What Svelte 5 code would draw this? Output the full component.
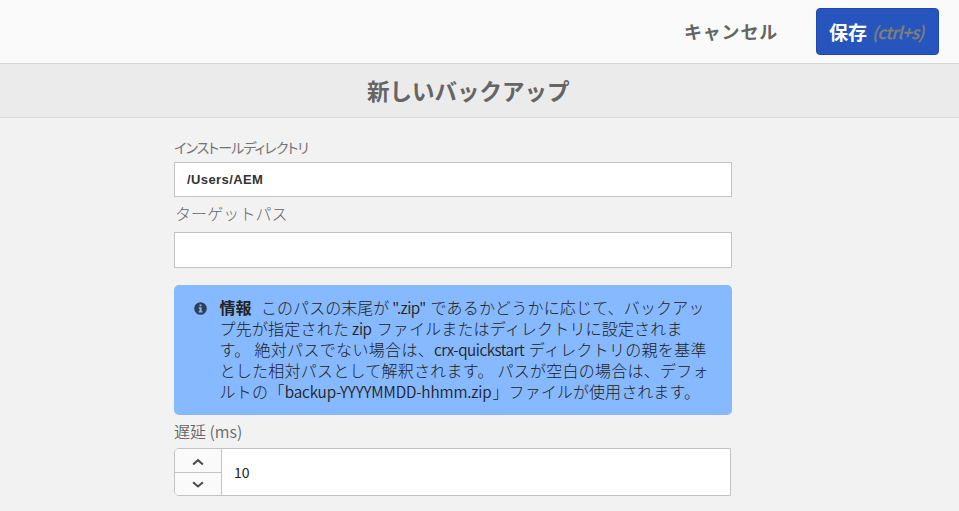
<script>
  const lines = [
    [{ t: 'このパスの末尾が', s: 0.05 }, { t: ' ".zip" ', latin: true, s: -0.5, m: 2 }, { t: 'であるかどうかに応じて、バックアッ', s: 0.18 }],
    [{ t: 'プ先が指定された', s: 0.2 }, { t: ' zip ', latin: true, s: -0.4, m: 2 }, { t: 'ファイルまたはディレクトリに設定されま', s: 0.16 }],
    [{ t: 'す。 絶対パスでない場合は、', s: 0.33 }, { t: 'crx-quickstart ', latin: true, s: -0.48, m: 1.7 }, { t: 'ディレクトリの親を基準', s: 0.28 }],
    [{ t: 'とした相対パスとして解釈されます。 パスが空白の場合は、デフォ', s: 0.25 }],
    [{ t: 'ルトの「', s: 0.3 }, { t: 'backup-YYYYMMDD-hhmm.zip', latin: true, s: -0.15, m: 1 }, { t: '」ファイルが使用されます。', s: 0.08 }]
  ];
</script>

<div class="page">
  <header>
    <button class="cancel">キャンセル</button>
    <button class="save"><span>保存</span><em>(ctrl+s)</em></button>
  </header>
  <h1>新しいバックアップ</h1>
  <main>
    <label class="install" for="install">インストールディレクトリ</label>
    <div class="field" id="install">/Users/AEM</div>
    <label class="target" for="target">ターゲットパス</label>
    <div class="field tall" id="target"></div>
    <section class="info">
      <svg class="badge" width="13" height="13" viewBox="0 0 13 13">
        <circle cx="6.5" cy="6.5" r="6.3" fill="#303f54" />
        <path d="M5.5 2.4h2v1.9h-2zM4.7 5.3h2.9v3.9h.9v1.2H4.6V9.2h.9V6.5h-.8z" fill="#86b9ff" />
      </svg>
      <div class="copy">
        {#each lines as line, i}
          <div class="line">{#if i === 0}<b>情報</b>{/if}{#each line as p}<span class:latin={p.latin} style="letter-spacing: {p.s}px; margin-right: {p.m ?? 0}px">{p.t}</span>{/each}</div>
        {/each}
      </div>
    </section>
    <label class="delay" for="delay">遅延 (ms)</label>
    <div class="number" id="delay">
      <div class="steps">
        <div class="step"><svg width="12" height="8" viewBox="0 0 12 8"><path d="M1.1 6.5 6 2.2l4.9 4.3" /></svg></div>
        <div class="step"><svg width="12" height="8" viewBox="0 0 12 8"><path d="M1.1 1.2 6 5.5l4.9-4.3" /></svg></div>
      </div>
      <div class="value">10</div>
    </div>
  </main>
</div>

<style>
  :global(body) { margin: 0; }
  .page {
    width: 959px; height: 511px; overflow: hidden; background: #f2f2f2; color: #656565;
    font-family: "Noto Sans CJK JP", sans-serif; box-sizing: border-box;
  }
  .page * { box-sizing: border-box; }
  header {
    height: 64px; background: #fafafa; border-bottom: 1px solid #d7d7d7;
    display: flex; justify-content: flex-end; padding: 8px 20px 0 0; gap: 37px;
  }
  button { border: 0; padding: 0; margin: 0; font-family: inherit; white-space: nowrap; }
  .cancel { height: 45px; width: 95px; background: none; color: #656565; font-size: 18px; font-weight: 700; letter-spacing: .8px; text-align: left; }
  .save {
    height: 47px; width: 123px; border-radius: 4px; background: #2656bd; border: 1px solid #1b49ac;
    color: #fff; font-size: 19px; font-weight: 700; display: flex; align-items: center; padding: 0 0 1px 12px; gap: 5px;
  }
  .save em { color: #817f7c; font-size: 17px; font-weight: 500; letter-spacing: -.7px; padding-top: 1px; -webkit-text-stroke: .25px #817f7c; }
  h1 {
    margin: 0; height: 54px; line-height: 52px; background: #ebebeb; border-bottom: 1px solid #d9d9d9;
    font-size: 22.5px; font-weight: 700; text-align: left; padding-left: 367px;
  }
  main { width: 558px; margin-left: 174px; padding-top: 18px; display: flex; flex-direction: column; }
  label { display: block; white-space: nowrap; }
  .install { height: 26px; line-height: 22px; font-size: 14px; font-feature-settings: "palt"; letter-spacing: -.9px; color: #737373; }
  .field {
    height: 35px; background: #fff; border: 1px solid #c3c3c3; padding-left: 12px;
    font: 700 13px/33px "Liberation Sans", sans-serif; letter-spacing: .4px; color: #333;
  }
  .tall { height: 36px; }
  .target { height: 35px; line-height: 33px; font-size: 16px; font-weight: 300; letter-spacing: .1px; padding-left: 1px; }
  .info { margin-top: 17px; height: 130px; border-radius: 5px; background: #86b9ff; display: flex; padding: 12px 0 0 20px; color: #222; }
  .badge { margin-top: 5px; flex: none; }
  .copy { margin-left: 12.5px; }
  .line { height: 21px; line-height: 21px; font-size: 16px; font-weight: 300; white-space: pre; display: flex; }
  .line b { font-weight: 700; margin-right: 9.5px; }
  .latin { font-size: 15.3px; font-weight: 350; }
  .delay { height: 33px; line-height: 33px; font-size: 16px; font-weight: 350; }
  .number { width: 557px; height: 48px; display: flex; border: 1px solid #c3c3c3; border-radius: 5px 0 0 5px; background: #fff; overflow: hidden; }
  .steps { width: 47px; border-right: 1px solid #c3c3c3; background: #fafafa; }
  .step { height: 23px; display: flex; align-items: center; justify-content: center; }
  .step:first-child { height: 24px; padding-top: 2px; border-bottom: 1px solid #c3c3c3; }
  .step path { fill: none; stroke: #4b4b4b; stroke-width: 2; }
  .value { padding-left: 12px; line-height: 47px; font-size: 14px; color: #222; }
</style>
